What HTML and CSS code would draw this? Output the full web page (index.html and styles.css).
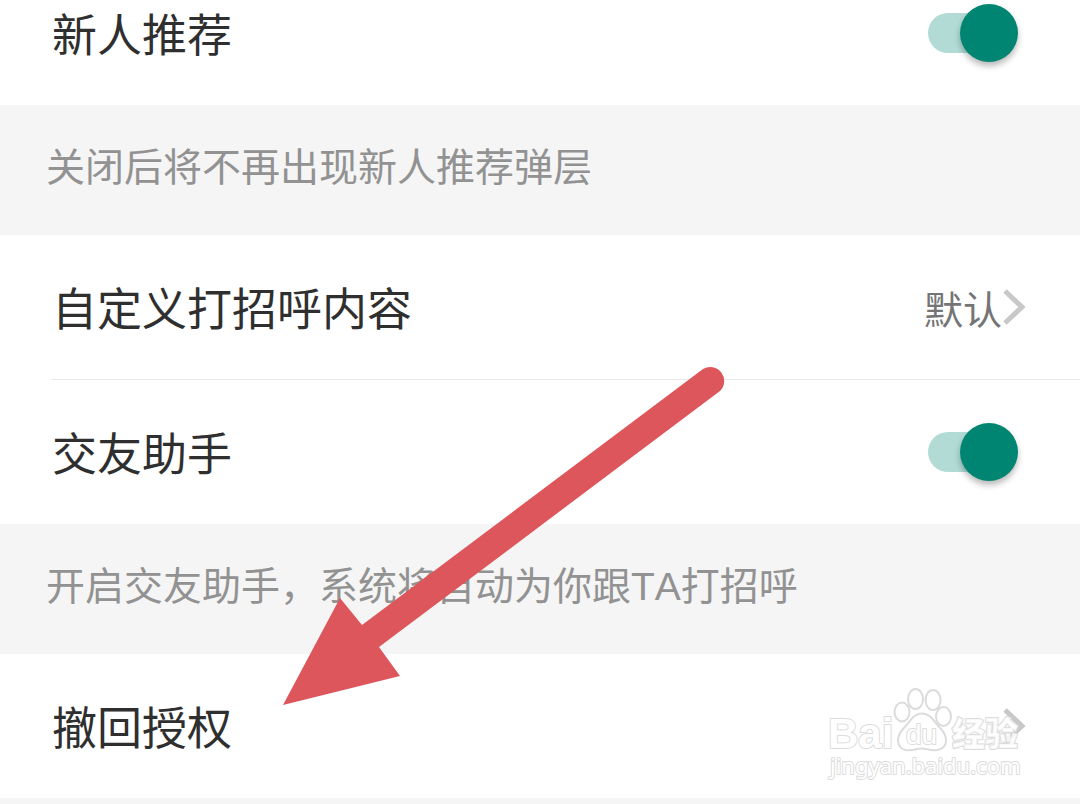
FILE: index.html
```html
<!DOCTYPE html>
<html lang="zh-CN">
<head>
<meta charset="utf-8">
<meta name="viewport" content="width=device-width, initial-scale=1">
<title>设置</title>
<link rel="stylesheet" href="styles.css">
</head>
<body>
<main class="settings">
  <div class="row row-first">
    <label class="title" for="newcomer">新人推荐</label>
    <input class="switch" type="checkbox" id="newcomer" checked>
  </div>
  <p class="hint">关闭后将不再出现新人推荐弹层</p>
  <button class="row row-link" type="button">
    <span class="title">自定义打招呼内容</span>
    <span class="value">默认</span>
    <svg class="chevron" viewBox="0 0 24 38" aria-hidden="true"><path d="M3 3 L20 19 L3 35"/></svg>
  </button>
  <div class="divider"></div>
  <div class="row">
    <label class="title" for="assistant">交友助手</label>
    <input class="switch" type="checkbox" id="assistant" checked>
  </div>
  <p class="hint">开启交友助手，系统将自动为你跟TA打招呼</p>
  <button class="row row-link" type="button">
    <span class="title">撤回授权</span>
    <svg class="chevron" viewBox="0 0 24 38" aria-hidden="true"><path d="M3 3 L20 19 L3 35"/></svg>
  </button>
</main>

<svg class="arrow" viewBox="282 366 444 340" aria-hidden="true">
  <path d="M283 705 L340 598 L362 625 L703 369 A14 14 0 0 1 720 391 L379 647 L400 676 Z"/>
</svg>

<svg class="watermark" viewBox="820 680 210 104" role="img" aria-label="Baidu 经验 jingyan.baidu.com">
  <text class="mark-brand" x="828" y="748">Bai</text>
  <g class="mark-paw">
    <ellipse cx="902" cy="712" rx="7.500" ry="9.500"/>
    <ellipse cx="915.500" cy="699" rx="7.500" ry="10"/>
    <ellipse cx="933" cy="700" rx="7.500" ry="10"/>
    <ellipse cx="943.500" cy="716.500" rx="7.500" ry="9.500"/>
    <path d="M922 713.500 C931 713.500 934 722 940 728 C948 736 949 748 937 750 C930 751 927 748.500 922 748.500 C917 748.500 913 751 906 750 C896 748 896 737 903 729 C910 722 913 713.500 922 713.500 Z"/>
  </g>
  <text class="mark-du" x="906" y="744">du</text>
  <text class="mark-cn" x="952" y="746">经验</text>
  <text class="mark-url" x="830" y="774">jingyan.baidu.com</text>
</svg>
</body>
</html>
```

FILE: styles.css
```css
* {
  box-sizing: border-box;
}

body {
  margin: 0;
  min-height: 100vh;
  position: relative;
  overflow: hidden;
  background: #f5f5f5;
  font-family: "Noto Sans CJK SC", sans-serif;
}

.row {
  display: flex;
  align-items: center;
  width: 100%;
  min-height: 144px;
  padding: 0 62px 0 52px;
  background: #fff;
}

.row-first {
  min-height: 105px;
  padding-bottom: 39px;
}

.row-link {
  padding-right: 54px;
  border: 0;
  font: inherit;
  text-align: left;
  cursor: pointer;
}

.title {
  flex: 1;
  font-size: 45px;
  line-height: 66px;
  color: #2f2f2f;
}

.value {
  font-size: 39px;
  line-height: 56px;
  color: #757575;
}

.hint {
  margin: 0;
  padding: 35px 46px 39px;
  font-family: "Liberation Sans", "Noto Sans CJK SC", sans-serif;
  font-size: 39px;
  font-kerning: none;
  line-height: 56px;
  color: #929292;
}

.divider {
  height: 1px;
  background: #fff linear-gradient(#e8e8e8, #e8e8e8) 52px 0 no-repeat;
}

.chevron {
  width: 24px;
  height: 38px;
  fill: none;
  stroke: #c8c8c8;
  stroke-width: 5;
}

.switch {
  appearance: none;
  display: flex;
  align-items: center;
  width: 90px;
  height: 58px;
  margin: 0;
  cursor: pointer;
}

.switch::before {
  content: "";
  flex: none;
  width: 72px;
  height: 40px;
  margin-right: -72px;
  border-radius: 20px;
  background: #b2dbd6;
}

.switch::after {
  content: "";
  flex: none;
  width: 58px;
  height: 58px;
  border-radius: 50%;
  background: #8f9a98;
  box-shadow: 0 4px 6px rgba(0, 0, 0, 0.28);
}

.switch:checked::after {
  margin-left: 32px;
  background: #008573;
}

.arrow {
  position: absolute;
  left: 282px;
  top: 366px;
  width: 444px;
  height: 340px;
  fill: #dc565b;
  pointer-events: none;
}

.watermark {
  position: absolute;
  right: 50px;
  top: 680px;
  width: 210px;
  height: 104px;
  fill: #fff;
  fill-opacity: 0.8;
  stroke: #dcdcdc;
  stroke-width: 2;
  stroke-linejoin: round;
  pointer-events: none;
}

.watermark text {
  paint-order: stroke;
  font-family: "Liberation Sans", "Noto Sans CJK SC", sans-serif;
  font-weight: 700;
  fill-opacity: 1;
}

.mark-brand {
  font-size: 42px;
}

.watermark .mark-du {
  font-size: 28px;
  font-weight: 400;
}

.watermark .mark-cn {
  font-family: "Noto Sans CJK SC", sans-serif;
  font-size: 33px;
  font-weight: 900;
  fill-opacity: 0.8;
}

.watermark .mark-url {
  font-family: "Noto Sans", sans-serif;
  font-size: 22px;
  font-weight: 400;
}
```
